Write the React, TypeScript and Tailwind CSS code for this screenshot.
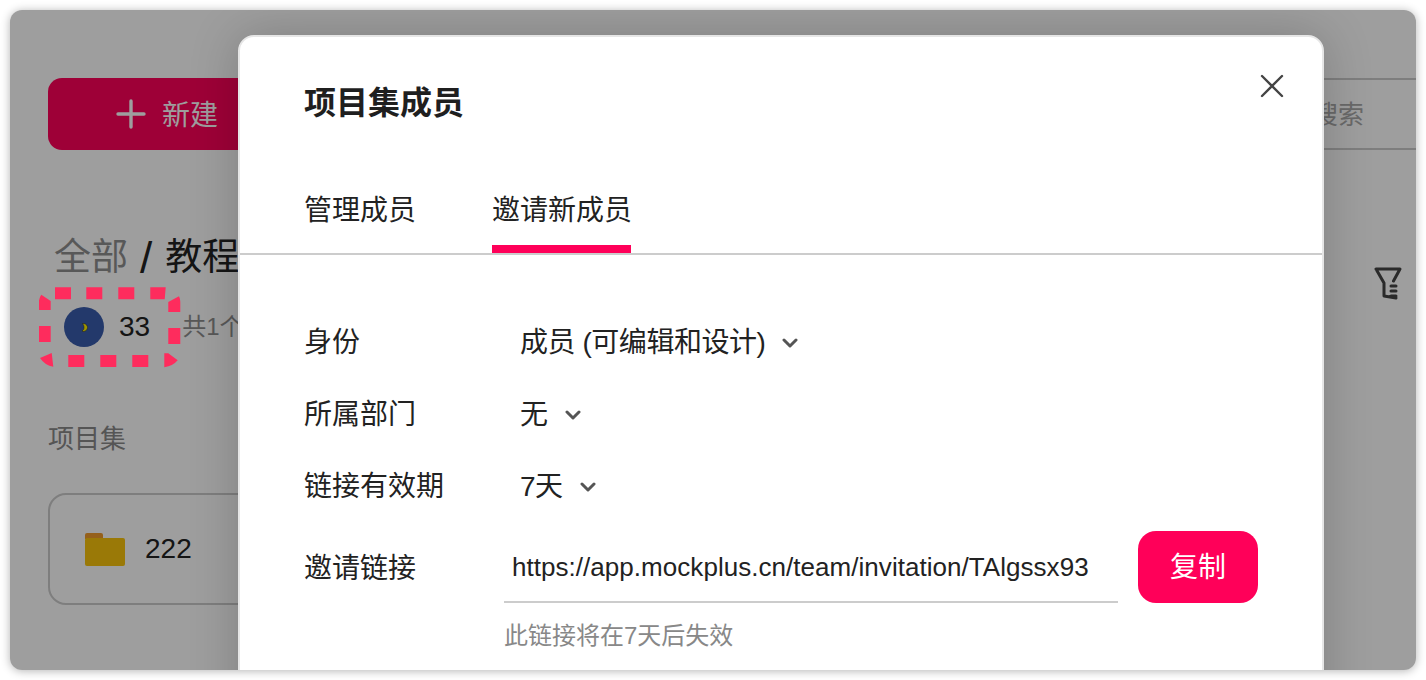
import React from "react";

const fontStack = "font-['Liberation_Sans','Noto_Sans_CJK_SC',sans-serif]";

const Chevron = () => (
  <svg width="16" height="10" viewBox="0 0 16 10" fill="none" className="ml-[17px]">
    <path d="M2 2l6 6 6-6" stroke="#555" strokeWidth="3" strokeLinecap="round" strokeLinejoin="round" />
  </svg>
);

const Row = ({ label, value }: { label: string; value: string }) => (
  <div className="flex h-[72px] items-center pt-[4px]">
    <div className="w-[216px] text-[28px] leading-[36px] text-[#222]">{label}</div>
    <div className="flex items-center text-[28px] leading-[36px] tracking-[-0.45px] text-[#222]">
      {value}
      <Chevron />
    </div>
  </div>
);

const Background = () => (
  <div className="flex h-full flex-col pt-[68px]">
    <div className="flex h-[72px] items-stretch pl-[38px]">
      <div className="flex h-[72px] w-[300px] items-center rounded-[14px] bg-[#ff0059] pl-[68px] text-white">
        <svg width="30" height="30" viewBox="0 0 30 30" fill="none">
          <path d="M15 2v26M2 15h26" stroke="currentColor" strokeWidth="3.4" strokeLinecap="round" />
        </svg>
        <span className="ml-[16px] pt-[4px] text-[28px] leading-[36px]">新建</span>
      </div>
      <div className="ml-auto flex w-[300px] items-center justify-end border-y-2 border-[#ccc] pr-[52px] pt-[2px] text-[26px] leading-[36px] text-[#aaa]">
        搜索
      </div>
    </div>
    <div className="flex items-start justify-between pl-[44px] pr-[14px] pt-[85px]">
      <div className="flex h-[46px] items-center text-[37px] leading-[46px] text-[#222]">
        <span className="text-[#8f8f8f]">全部</span>
        <span className="ml-[12px] text-[44px] font-normal leading-[46px]">/</span>
        <span className="ml-[13px]">教程</span>
      </div>
      <svg width="28" height="34" viewBox="0 0 28 34" fill="none" className="mt-[31px]">
        <path
          d="M2 3h24l-6.500 12M2 3l8 14v13l12 2M17 20h5M17 25h5M17 30h5"
          stroke="#444"
          strokeWidth="3"
          strokeLinecap="round"
          strokeLinejoin="round"
        />
      </svg>
    </div>
    <div className="-mt-[3px] flex h-[60px] items-center pl-[54px]">
      <div className="relative h-[40px] w-[40px] rounded-full bg-[#395cad]">
        <svg width="8" height="9" viewBox="0 0 8 9" className="absolute left-[17px] top-[16px]">
          <path
            d="M1.500.5L3 .5C5.500 1 6.500 3 6.500 4.500 6.500 6.500 5 8.500 2 8.500L1 8C2.500 7 3 6 3 4.500 3 3 2.500 2 1.500.5z"
            fill="#fff000"
            stroke="#222"
            strokeWidth="0.500"
          />
        </svg>
      </div>
      <span className="ml-[15px] text-[28px] leading-[36px] text-[#222]">33</span>
      <span className="ml-[32px] text-[24px] leading-[36px] text-[#8f8f8f]">共1个项目集</span>
    </div>
    <div className="mt-[64px] pl-[38px] text-[26px] leading-[36px] text-[#8a8a8a]">项目集</div>
    <div className="ml-[38px] mt-[36px] flex h-[112px] w-[400px] items-center rounded-[18px] border-2 border-[#ccc] pl-[35px]">
      <svg width="40" height="33" viewBox="0 0 40 33">
        <path d="M0 2a2 2 0 012-2h14a2 2 0 012 2v4H0z" fill="#f09c2c" />
        <rect x="0" y="5" width="40" height="28" rx="2" fill="#f8c30c" />
      </svg>
      <span className="ml-[20px] text-[28px] leading-[36px] text-[#222]">222</span>
    </div>
  </div>
);

// dashed highlight ring, pieces traced from the shot (viewBox uses page coordinates)
const Ring = () => (
  <svg width="144" height="84" viewBox="38 286 144 84" className="absolute left-[28px] top-[276px]">
    <path
      fill="#fe2c5d"
      d="M55 287.300h16v12H55zM86.300 287.300h16v12h-16zM118.300 287.300h16v12h-16zM150.300 287.300h15.400l-1 12h-14.400z
         M39 310v-9.500Q39.500 297 41.300 294.700L50.700 301v9zM39 326h11.700v16H39z
         M40 358l11.700-5 1.600 13.700Q45 365.500 40 358zM68.300 355h16v12h-16zM100.300 355h16v12h-16zM132.300 355h16v12h-16z
         M164.300 353.300h4l9.400 7Q173 366 164.300 367.300zM168.300 328h12v16h-12z
         M168.300 302l10.700-5.700Q180.300 299 180.300 302v10h-12z"
    />
  </svg>
);

const App = () => {
  return (
    <div className={`h-[680px] w-[1426px] overflow-hidden bg-white p-[10px] ${fontStack}`}>
      <div className="relative h-[660px] w-[1406px] overflow-hidden rounded-[12px] bg-white shadow-[0_1px_10px_rgba(0,0,0,0.3)]">
        <Background />
        <div className="absolute inset-0 bg-black/[0.38]" />
        <Ring />
        <div className="absolute left-[228px] top-[25px] h-[700px] w-[1086px] rounded-[16px] border-2 border-[#e6e6e6] bg-white shadow-[0_0_50px_rgba(0,0,0,0.2)]">
          <div className="flex h-[132px] items-start justify-between pl-[64px] pr-[38px] pt-[46px]">
            <div className="text-[32px] font-bold leading-[40px] text-[#1f1f1f]">项目集成员</div>
            <svg width="24" height="24" viewBox="0 0 24 24" fill="none" className="-mt-[9px]">
              <path d="M2 2l20 20M22 2L2 22" stroke="#444" strokeWidth="2.400" strokeLinecap="round" />
            </svg>
          </div>
          <div className="flex h-[86px] items-start border-b-2 border-[#ccc] pl-[64px]">
            <div className="pt-[24px] text-[28px] leading-[36px] text-[#222]">管理成员</div>
            <div className="ml-[76px] h-[84px] w-[139px] whitespace-nowrap border-b-8 border-[#ff0059] pt-[24px] text-[28px] leading-[36px] text-[#222]">
              邀请新成员
            </div>
          </div>
          <div className="pl-[64px] pt-[50px]">
            <Row label="身份" value="成员 (可编辑和设计)" />
            <Row label="所属部门" value="无" />
            <Row label="链接有效期" value="7天" />
            <div className="mt-[10px] flex items-start">
              <div className="flex h-[72px] w-[200px] items-center pt-[4px] text-[28px] leading-[36px] text-[#222]">邀请链接</div>
              <div className="flex h-[72px] w-[614px] items-center border-b-2 border-[#ccc] pl-[8px] pt-[2px] text-[26px] leading-[36px] tracking-[0.04px] text-[#222]">
                https://app.mockplus.cn/team/invitation/TAlgssx93
              </div>
              <div className="ml-[20px] flex h-[72px] w-[120px] items-center justify-center rounded-[18px] bg-[#ff0059] pt-[2px] text-[28px] leading-[36px] text-white">
                复制
              </div>
            </div>
            <div className="ml-[200px] mt-[16px] text-[24px] leading-[34px] text-[#888]">此链接将在7天后失效</div>
          </div>
        </div>
      </div>
    </div>
  );
};

export default App;
